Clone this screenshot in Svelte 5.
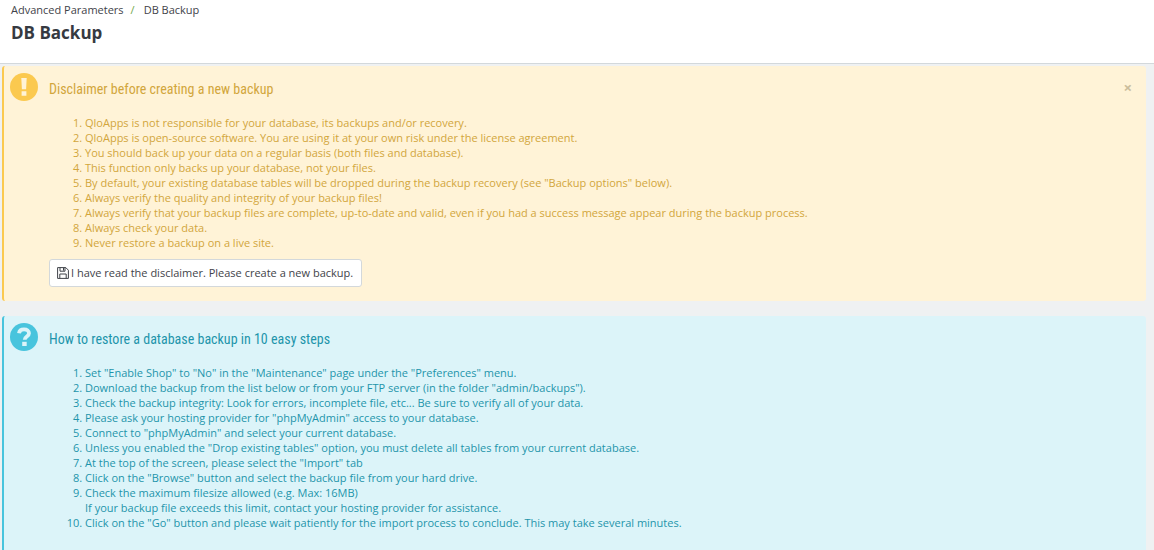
<script>
  const warnings = [
    'QloApps is not responsible for your database, its backups and/or recovery.',
    'QloApps is open-source software. You are using it at your own risk under the license agreement.',
    'You should back up your data on a regular basis (both files and database).',
    'This function only backs up your database, not your files.',
    'By default, your existing database tables will be dropped during the backup recovery (see "Backup options" below).',
    'Always verify the quality and integrity of your backup files!',
    'Always verify that your backup files are complete, up-to-date and valid, even if you had a success message appear during the backup process.',
    'Always check your data.',
    'Never restore a backup on a live site.'
  ];

  const steps = [
    ['Set "Enable Shop" to "No" in the "Maintenance" page under the "Preferences" menu.'],
    ['Download the backup from the list below or from your FTP server (in the folder "admin/backups").'],
    ['Check the backup integrity: Look for errors, incomplete file, etc... Be sure to verify all of your data.'],
    ['Please ask your hosting provider for "phpMyAdmin" access to your database.'],
    ['Connect to "phpMyAdmin" and select your current database.'],
    ['Unless you enabled the "Drop existing tables" option, you must delete all tables from your current database.'],
    ['At the top of the screen, please select the "Import" tab'],
    ['Click on the "Browse" button and select the backup file from your hard drive.'],
    ['Check the maximum filesize allowed (e.g. Max: 16MB)', 'If your backup file exceeds this limit, contact your hosting provider for assistance.'],
    ['Click on the "Go" button and please wait patiently for the import process to conclude. This may take several minutes.']
  ];

  let showDisclaimer = $state(true);
</script>

<header class="page-head">
  <nav aria-label="Breadcrumb">
    <ol class="breadcrumb">
      <li>Advanced Parameters</li>
      <li>DB Backup</li>
    </ol>
  </nav>
  <h1>DB Backup</h1>
</header>

<main>
  {#if showDisclaimer}
    <section class="alert warning">
      <svg class="badge" viewBox="0 0 28 28" aria-hidden="true">
        <circle cx="14" cy="14" r="14" fill="#fbc94f" />
        <path d="M11.3 5h5.4l-.6 11.2h-4.2zM11.6 18.2h4.8v4.6h-4.8z" fill="#fff3d7" />
      </svg>
      <div class="body">
        <h2>Disclaimer before creating a new backup</h2>
        <ol class="list">
          {#each warnings as line}
            <li>{line}</li>
          {/each}
        </ol>
        <button class="create" type="button">
          <svg viewBox="0 0 12 12" aria-hidden="true">
            <path d="M.6.6h8.2l2.6 2.6v8.2H.6zM3 .6v3.6h5V.6M2.8 11.4V7h6.4v4.4M6.5 1v2.6" fill="none" stroke="currentColor" stroke-width="1" stroke-linejoin="round" />
          </svg>
          I have read the disclaimer. Please create a new backup.
        </button>
      </div>
      <button class="close" type="button" aria-label="Close" onclick={() => (showDisclaimer = false)}>×</button>
    </section>
  {/if}

  <section class="alert info">
    <svg class="badge" viewBox="0 0 28 28" aria-hidden="true">
      <circle cx="14" cy="14" r="14" fill="#48c4dd" />
      <path d="M9 10.2C9.4 7.4 11.4 6.4 14 6.4c3 0 5 1.6 5 3.9 0 3.3-4.3 3.1-4.3 6.4" fill="none" stroke="#dcf4f9" stroke-width="3.8" />
      <path d="M12.2 18.8h4.5v4.2h-4.5z" fill="#dcf4f9" />
    </svg>
    <div class="body">
      <h2>How to restore a database backup in 10 easy steps</h2>
      <ol class="list">
        {#each steps as lines}
          <li>
            {#each lines as line, i}{#if i > 0}<br />{/if}{line}{/each}
          </li>
        {/each}
      </ol>
    </div>
  </section>
</main>

<style>
  :global(body) {
    background: #eff1f2;
    color: #3f4349;
    font: 11px/15px 'Open Sans', 'Noto Sans', sans-serif;
    overflow-x: hidden;
    scrollbar-width: none;
  }

  .page-head {
    padding: 2px 11px 18px;
    background: #fff;
    border-bottom: 1px solid #d3d8db;
  }

  .breadcrumb {
    display: flex;
    margin: 0;
    padding: 0;
    list-style: none;
  }

  .breadcrumb li + li::before {
    content: '/';
    padding: 0 9px 0 7px;
    color: #72a84c;
  }

  h1 {
    margin: 4px 0 0;
    color: #363a41;
    font-size: 17px;
    font-weight: 700;
    line-height: 24px;
  }

  main {
    display: flex;
    flex-direction: column;
    gap: 15px;
    padding: 2px 8px 0 2px;
  }

  .alert {
    display: flex;
    align-items: flex-start;
    border-left: 2px solid;
    border-radius: 3px;
    padding: 7px 14px 14px 6px;
  }

  .warning {
    background: #fff3d7;
    border-color: #fbc94f;
    color: #d2a63c;
  }

  .info {
    background: #dcf4f9;
    border-color: #48c4dd;
    color: #1e94ab;
    padding-bottom: 24px;
  }

  .badge {
    flex: none;
    width: 28px;
    height: 28px;
  }

  .body {
    flex: 1;
    margin-left: 11px;
  }

  h2 {
    margin: 5px 0 15px;
    font: 400 14px/22px 'Ubuntu Condensed', 'Roboto Condensed', Roboto, sans-serif;
  }

  .list {
    margin: 0;
    padding-left: 36px;
  }

  .create {
    display: flex;
    align-items: center;
    gap: 2px;
    margin-top: 9px;
    padding: 5px 8px 5px 7px;
    background: #fff;
    border: 1px solid #d3d8db;
    border-radius: 3px;
    color: #3f4349;
    font: inherit;
    line-height: 16px;
  }

  .create svg {
    width: 12px;
    height: 12px;
  }

  .close {
    margin-top: 6px;
    padding: 0;
    background: none;
    border: 0;
    color: #cbbd9c;
    font: 700 15px/16px 'Open Sans', sans-serif;
  }
</style>
